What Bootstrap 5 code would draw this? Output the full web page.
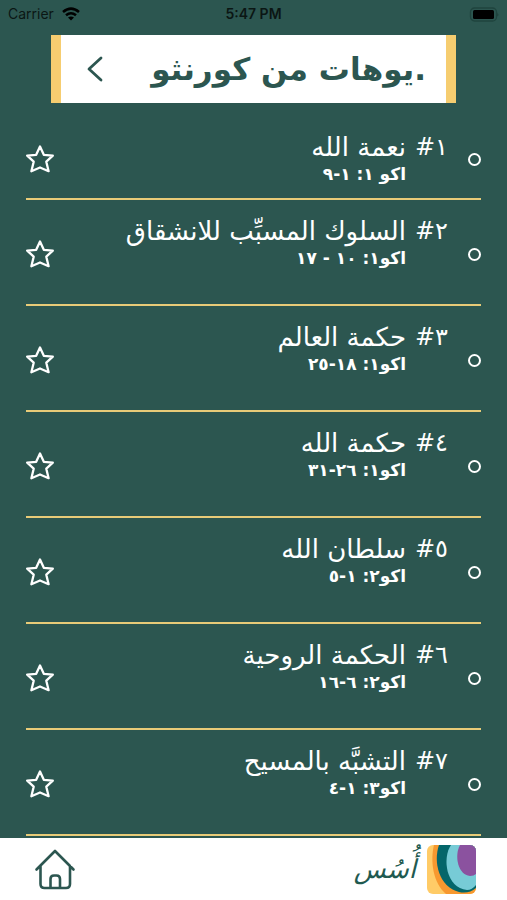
<!DOCTYPE html>
<html lang="ar" dir="rtl">
<head>
<meta charset="utf-8">
<meta name="viewport" content="width=device-width, initial-scale=1">
<title>أُسُس</title>
<link href="https://cdn.jsdelivr.net/npm/bootstrap@5.3.0/dist/css/bootstrap.min.css" rel="stylesheet">
<style>
  body { background: #2c5650; font-family: "DejaVu Sans", sans-serif; }
  .status { height: 28px; font: 14px/28px Inter, sans-serif; color: #0b1614; padding: 0 8px; }
  .status strong { font-weight: 600; color: #0b1614; }
  .heading { margin: 7px 51px 0; height: 68px; background: #fff; border: solid #f6cd70; border-width: 0 10px; padding: 0 20px; color: #2c5650; }
  .heading h1 { font-size: 31px; line-height: 68px; }
  .lessons { margin: 17px 26px 0; }
  .lesson { min-height: 106px; border-bottom: 2px solid #e8cb78; padding-top: 4px; color: #fff; }
  .lesson:first-child { min-height: 80px; padding-top: 0; }
  .lesson:first-child .words { padding-top: 12px; }
  .words { padding-top: 12px; margin-inline-start: 20px; gap: 9px; font-size: 24px; line-height: 30px; }
  .words h2 { font-size: 26px; line-height: 30px; font-weight: 400; }
  .words p { font-size: 17px; line-height: 24px; font-weight: 700; }
  .dot { width: 13px; height: 13px; border: 2px solid #fff; border-radius: 50%; }
  .plain { background: none; border: 0; padding: 0; color: inherit; line-height: 0; }
  .tabs { background: #fff; height: 62px; padding: 0 31px 0 34px; color: #2c5650; }
  .brand { color: #1f5a50; text-decoration: none; gap: 11px; font-size: 26px; line-height: 48px; font-style: italic; }
</style>
<script src="https://cdn.jsdelivr.net/npm/bootstrap@5.3.0/dist/js/bootstrap.bundle.min.js"></script>
</head>
<body class="d-flex flex-column min-vh-100">
<svg class="d-none"><symbol id="star" viewBox="0 0 28 28"><path d="M14 1.500 17.800 9.800 26.800 10.600 20.300 16.700 22.600 26.200 14 22.500 5.400 26.200 7.700 16.700 1.200 10.600 10.200 9.800Z" fill="none" stroke="#fff" stroke-width="2.3" stroke-linejoin="round"/></symbol></svg>

<div class="status row g-0 align-items-center" dir="ltr">
  <div class="col d-flex align-items-center gap-2"><span>Carrier</span>
    <svg width="18" height="14" viewBox="0 0 18 14" fill="none" stroke="#000" stroke-width="2.6"><path d="M1 5Q9-1.8 17 5M4 8.3Q9 4.2 14 8.3"/><path d="M9 13.5 6 10.6Q9 8.3 12 10.6Z" fill="#000" stroke="none"/></svg>
  </div>
  <strong class="col-auto">5:47 PM</strong>
  <div class="col d-flex justify-content-end">
    <svg width="30" height="15" viewBox="0 0 30 15"><rect x="1.500" y="1" width="26" height="13" rx="4" fill="none" stroke="#1f443e" stroke-width="1.3"/><rect x="4" y="3" width="21" height="9" rx="1.500"/><path d="M28.500 5.500Q30 7.500 28.500 9.500Z" fill="#1b3833"/></svg>
  </div>
</div>

<header class="heading d-flex align-items-center justify-content-between">
  <h1 class="m-0 fw-bold text-nowrap">.يوهات من كورنثو</h1>
  <button class="plain" type="button" aria-label="رجوع"><svg width="28" height="28" viewBox="0 0 28 28" fill="none" stroke="#2c5650" stroke-width="2.8" stroke-linecap="round" stroke-linejoin="round"><path d="M20 3 8 14 20 25"/></svg></button>
</header>

<main class="flex-grow-1">
<ul class="lessons list-unstyled mb-0 p-0">
  <li class="lesson d-flex"><span class="dot align-self-center"></span><div class="words d-flex flex-grow-1"><span>١#</span><div><h2 class="m-0">نعمة الله</h2><p class="m-0">اكو ١: ١-٩</p></div></div><button class="plain" type="button" aria-label="إضافة إلى المفضلة"><svg width="28" height="28"><use href="#star"/></svg></button></li>
  <li class="lesson d-flex"><span class="dot align-self-center"></span><div class="words d-flex flex-grow-1"><span>٢#</span><div><h2 class="m-0">السلوك المسبِّب للانشقاق</h2><p class="m-0">اكو١: ١٠ - ١٧</p></div></div><button class="plain" type="button" aria-label="إضافة إلى المفضلة"><svg width="28" height="28"><use href="#star"/></svg></button></li>
  <li class="lesson d-flex"><span class="dot align-self-center"></span><div class="words d-flex flex-grow-1"><span>٣#</span><div><h2 class="m-0">حكمة العالم</h2><p class="m-0">اكو١: ١٨-٢٥</p></div></div><button class="plain" type="button" aria-label="إضافة إلى المفضلة"><svg width="28" height="28"><use href="#star"/></svg></button></li>
  <li class="lesson d-flex"><span class="dot align-self-center"></span><div class="words d-flex flex-grow-1"><span>٤#</span><div><h2 class="m-0">حكمة الله</h2><p class="m-0">اكو١: ٢٦-٣١</p></div></div><button class="plain" type="button" aria-label="إضافة إلى المفضلة"><svg width="28" height="28"><use href="#star"/></svg></button></li>
  <li class="lesson d-flex"><span class="dot align-self-center"></span><div class="words d-flex flex-grow-1"><span>٥#</span><div><h2 class="m-0">سلطان الله</h2><p class="m-0">اكو٢: ١-٥</p></div></div><button class="plain" type="button" aria-label="إضافة إلى المفضلة"><svg width="28" height="28"><use href="#star"/></svg></button></li>
  <li class="lesson d-flex"><span class="dot align-self-center"></span><div class="words d-flex flex-grow-1"><span>٦#</span><div><h2 class="m-0">الحكمة الروحية</h2><p class="m-0">اكو٢: ٦-١٦</p></div></div><button class="plain" type="button" aria-label="إضافة إلى المفضلة"><svg width="28" height="28"><use href="#star"/></svg></button></li>
  <li class="lesson d-flex"><span class="dot align-self-center"></span><div class="words d-flex flex-grow-1"><span>٧#</span><div><h2 class="m-0">التشبَّه بالمسيح</h2><p class="m-0">اكو٣: ١-٤</p></div></div><button class="plain" type="button" aria-label="إضافة إلى المفضلة"><svg width="28" height="28"><use href="#star"/></svg></button></li>
</ul>
</main>

<footer class="tabs sticky-bottom d-flex align-items-center justify-content-between">
  <a class="brand d-flex align-items-center" href="#">
    <svg width="49" height="49" viewBox="0 0 49 49"><clipPath id="tile"><rect width="49" height="49" rx="6"/></clipPath><g clip-path="url(#tile)"><path fill="#ffcb67" d="M0 0h49v49H0z"/><path fill="#f7982f" d="M7 0C3 16 6 38 19 49H49V0Z"/><path fill="#04666a" d="M12 0C6 17 12 42 32 47Q42 49 49 43V0Z"/><path fill="#77cbd6" d="M24 0C15 13 19 43 40 45Q45 45 49 40V0Z"/><path fill="#8b529f" d="M33 0C27 11 31 30 43 31Q47 31 49 29V0Z"/></g></svg>
    <span>أُسُس</span>
  </a>
  <a href="#" aria-label="الرئيسية" class="d-flex"><svg width="42" height="42" viewBox="0 0 42 42" fill="none" stroke="#2c5650" stroke-width="2.6" stroke-linecap="round" stroke-linejoin="round"><path d="M2.500 21.500 21 3 39.500 21.500M6.500 18V36Q6.500 40 10.500 40H32Q36 40 36 36V18M16.500 40V31Q16.500 27.500 20 27.500H22.500Q26 27.500 26 31V40"/></svg></a>
</footer>
</body>
</html>
